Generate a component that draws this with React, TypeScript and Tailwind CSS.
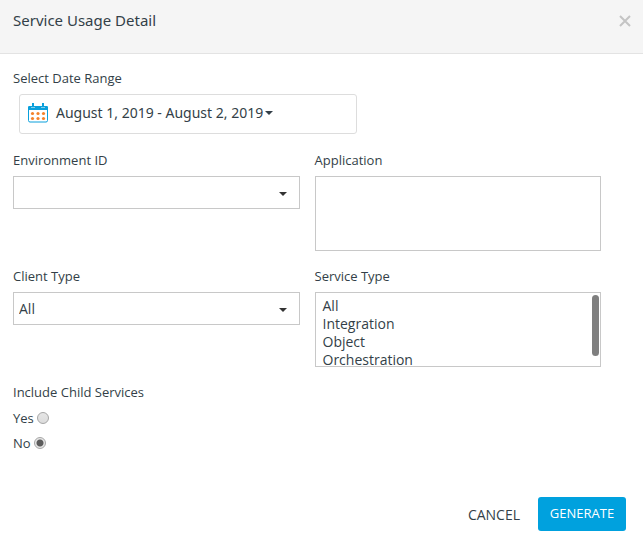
import React, { useId } from "react";

const labelClass = "block text-[13px] leading-5";

function Caret({ className = "" }: { className?: string }) {
  return (
    <svg className={className} width="8" height="4" viewBox="0 0 8 4" aria-hidden="true">
      <path d="M0 0H8L4 4Z" fill="currentColor" />
    </svg>
  );
}

function CalendarIcon() {
  return (
    <svg width="20" height="20" viewBox="0 0 20 20" aria-hidden="true">
      <rect x="0.5" y="3.5" width="19" height="15.5" rx="1.5" fill="#fff" stroke="#0aa0dc" />
      <path d="M0 7V4Q0 3 1.500 3H3V4.500H7V3H13V4.500H17V3H18.500Q20 3 20 4V7Z" fill="#0aa0dc" />
      <path d="M5 0V4M15 0V4" stroke="#0aa0dc" strokeWidth="2" />
      <g fill="#f5822a">
        {[4.5, 10, 15.5].map((x) =>
          [10.5, 15.5].map((y) => <circle key={`${x}-${y}`} cx={x} cy={y} r="1.6" />)
        )}
      </g>
    </svg>
  );
}

function Dropdown({ label, options }: { label: string; options: string[] }) {
  const id = useId();
  return (
    <div className="flex flex-col gap-1.5">
      <label htmlFor={id} className={labelClass}>{label}</label>
      <div className="relative">
        <select
          id={id}
          className="block h-[33px] w-full appearance-none border border-[#c8c8c8] bg-white pr-8 pl-[5px] text-sm outline-none"
        >
          {options.map((option) => (
            <option key={option}>{option}</option>
          ))}
        </select>
        <Caret className="pointer-events-none absolute top-4 right-[13px] text-[#333]" />
      </div>
    </div>
  );
}

function ListBox({ label, options }: { label: string; options: string[] }) {
  const id = useId();
  return (
    <div className="flex flex-col gap-1.5">
      <label htmlFor={id} className={labelClass}>{label}</label>
      <div className="relative">
        <select
          id={id}
          multiple
          className="block h-[75px] w-full appearance-none overflow-y-auto border border-[#c8c8c8] bg-white px-[7px] py-[3px] text-sm outline-none [scrollbar-width:none]"
        >
          {options.map((option) => (
            <option key={option} className="h-[18px] min-h-0 p-0">{option}</option>
          ))}
        </select>
        {options.length > 3 && (
          <span className="pointer-events-none absolute top-[3px] right-0.5 h-[61px] w-[7px] rounded-full bg-[#7f7f7f]" />
        )}
      </div>
    </div>
  );
}

function Radio({ label, defaultChecked }: { label: string; defaultChecked?: boolean }) {
  return (
    <label className="flex h-5 items-center gap-[3px] text-[13px] leading-5">
      {label}
      <input
        type="radio"
        name="childServices"
        defaultChecked={defaultChecked}
        className="size-3 appearance-none rounded-full border border-[#a6a6a6] bg-linear-to-b from-[#e6e6e6] to-[#dcdcdc] checked:bg-[radial-gradient(circle,#5c5c5c_3px,#e6e6e6_4px)]"
      />
    </label>
  );
}

export default function App() {
  return (
    <div
      role="dialog"
      aria-labelledby="dialog-title"
      className="bg-white font-['Open_Sans','Noto_Sans',sans-serif] text-[#333f48]"
    >
      <header className="flex h-[54px] justify-between border-b border-[#e3e3e3] bg-[#f5f5f5] pt-2 pr-3 pl-[13px]">
        <h1 id="dialog-title" className="font-['Noto_Sans',sans-serif] text-[15px] leading-6">Service Usage Detail</h1>
        <button type="button" aria-label="Close" className="flex h-[26px] items-center text-[#c4c4c4]">
          <svg width="12" height="12" viewBox="0 0 12 12" aria-hidden="true">
            <path d="M1 1L11 11M11 1L1 11" stroke="currentColor" strokeWidth="2" />
          </svg>
        </button>
      </header>

      <form className="pb-3.5" onSubmit={(event) => event.preventDefault()}>
        <div className="pt-3.5 pr-[42px] pl-[13px]">
          <label htmlFor="date-range" className={labelClass}>Select Date Range</label>
          <button
            id="date-range"
            type="button"
            className="mt-1.5 ml-1.5 flex h-10 w-[338px] items-center rounded-[3px] border border-[#ddd] px-2 pb-0.5 font-['Noto_Sans',sans-serif] text-sm"
          >
            <CalendarIcon />
            <span className="ml-2">August 1, 2019 - August 2, 2019</span>
            <Caret className="ml-0.5" />
          </button>

          <div className="mt-4 grid grid-cols-2 gap-[15px]">
            <Dropdown label="Environment ID" options={[""]} />
            <ListBox label="Application" options={[]} />
            <Dropdown label="Client Type" options={["All", "Web", "Mobile"]} />
            <ListBox
              label="Service Type"
              options={["All", "Integration", "Object", "Orchestration"]}
            />
          </div>

          <fieldset className="mt-[15px]">
            <legend className={labelClass}>Include Child Services</legend>
            <div className="flex flex-col items-start gap-[5px] pt-1.5">
              <Radio label="Yes" />
              <Radio label="No" defaultChecked />
            </div>
          </fieldset>
        </div>

        <footer className="mt-11 flex items-center justify-end gap-[18px] pr-[17px]">
          <button type="button" className="pt-0.5 text-sm">CANCEL</button>
          <button
            type="submit"
            className="h-[34px] w-[88px] rounded-[3px] bg-[#00a1de] text-[13px] text-white"
          >
            GENERATE
          </button>
        </footer>
      </form>
    </div>
  );
}
